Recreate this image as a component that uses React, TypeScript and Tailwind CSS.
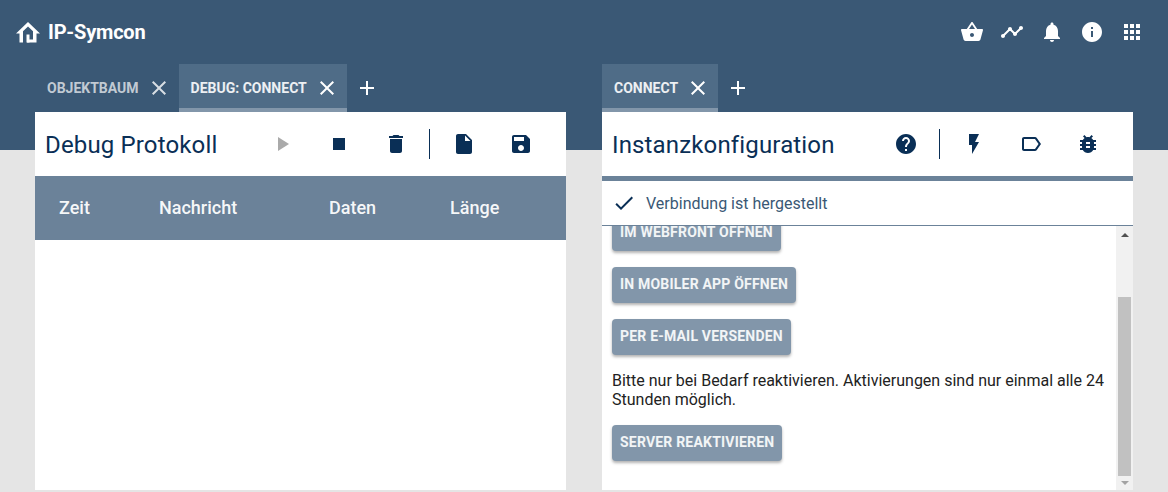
const P = {
  basket: "M17.21 9l-4.38-6.56c-.19-.28-.51-.42-.83-.42-.32 0-.64.14-.83.43L6.79 9H2c-.55 0-1 .45-1 1 0 .09.01.18.04.27l2.54 9.27c.23.84 1 1.46 1.92 1.46h13c.92 0 1.69-.62 1.93-1.46l2.54-9.27L23 10c0-.55-.45-1-1-1h-4.79zM9 9l3-4.4L15 9H9zm3 8c-1.1 0-2-.9-2-2s.9-2 2-2 2 .9 2 2-.9 2-2 2z",
  timeline: "M23 8c0 1.1-.9 2-2 2-.18 0-.35-.02-.51-.07l-3.56 3.55c.05.16.07.34.07.52 0 1.1-.9 2-2 2s-2-.9-2-2c0-.18.02-.36.07-.52l-2.55-2.55c-.16.05-.34.07-.52.07s-.36-.02-.52-.07l-4.55 4.56c.05.16.07.33.07.51 0 1.1-.9 2-2 2s-2-.9-2-2 .9-2 2-2c.18 0 .35.02.51.07l4.56-4.55C8.02 9.36 8 9.18 8 9c0-1.1.9-2 2-2s2 .9 2 2c0 .18-.02.36-.07.52l2.55 2.55c.16-.05.34-.07.52-.07s.36.02.52.07l3.55-3.56C19.02 8.35 19 8.18 19 8c0-1.1.9-2 2-2s2 .9 2 2z",
  bell: "M12 22c1.1 0 2-.9 2-2h-4c0 1.1.89 2 2 2zm6-6v-5c0-3.07-1.64-5.64-4.5-6.32V4c0-.83-.67-1.5-1.5-1.5s-1.5.67-1.5 1.5v.68C7.63 5.36 6 7.92 6 11v5l-2 2v1h16v-1l-2-2z",
  info: "M12 2C6.48 2 2 6.48 2 12s4.48 10 10 10 10-4.48 10-10S17.52 2 12 2zm1 15h-2v-6h2v6zm0-8h-2V7h2v2z",
  apps: "M4 8h4V4H4v4zm6 12h4v-4h-4v4zm-6 0h4v-4H4v4zm0-6h4v-4H4v4zm6 0h4v-4h-4v4zm6-10v4h4V4h-4zm-6 4h4V4h-4v4zm6 6h4v-4h-4v4zm0 6h4v-4h-4v4z",
  close: "M19 6.41L17.59 5 12 10.59 6.41 5 5 6.41 10.59 12 5 17.59 6.41 19 12 13.41 17.59 19 19 17.59 13.41 12z",
  add: "M19 13h-6v6h-2v-6H5v-2h6V5h2v6h6v2z",
  play: "M8 5v14l11-7z",
  stop: "M6 6h12v12H6z",
  trash: "M6 19c0 1.1.9 2 2 2h8c1.1 0 2-.9 2-2V7H6v12zM19 4h-3.5l-1-1h-5l-1 1H5v2h14V4z",
  file: "M6 2c-1.1 0-1.99.9-1.99 2L4 20c0 1.1.89 2 1.99 2H18c1.1 0 2-.9 2-2V8l-6-6H6zm7 7V3.5L18.5 9H13z",
  save: "M17 3H5c-1.11 0-2 .9-2 2v14c0 1.1.89 2 2 2h14c1.1 0 2-.9 2-2V7l-4-4zm-5 16c-1.66 0-3-1.34-3-3s1.34-3 3-3 3 1.34 3 3-1.34 3-3 3zm3-10H5V5h10v4z",
  help: "M12 2C6.48 2 2 6.48 2 12s4.48 10 10 10 10-4.48 10-10S17.52 2 12 2zm1 17h-2v-2h2v2zm2.07-7.75l-.9.92C13.45 12.9 13 13.5 13 15h-2v-.5c0-1.1.45-2.1 1.17-2.83l1.24-1.26c.37-.36.59-.86.59-1.41 0-1.1-.9-2-2-2s-2 .9-2 2H8c0-2.21 1.79-4 4-4s4 1.79 4 4c0 .88-.36 1.68-.93 2.25z",
  bolt: "M7 2v11h3v9l7-12h-4l4-8z",
  label: "M17.63 5.84C17.27 5.33 16.67 5 16 5L5 5.01C3.9 5.01 3 5.9 3 7v10c0 1.1.9 1.99 2 1.99L16 19c.67 0 1.27-.33 1.63-.84L22 12l-4.37-6.16zM16 17H5V7h11l3.55 5L16 17z",
  bug: "M20 8h-2.81c-.45-.78-1.07-1.45-1.82-1.96L17 4.41 15.59 3l-2.17 2.17C12.96 5.06 12.49 5 12 5c-.49 0-.96.06-1.41.17L8.41 3 7 4.41l1.62 1.63C7.88 6.55 7.26 7.22 6.81 8H4v2h2.09c-.05.33-.09.66-.09 1v1H4v2h2v1c0 .34.04.67.09 1H4v2h2.81c1.04 1.79 2.97 3 5.19 3s4.15-1.21 5.19-3H20v-2h-2.09c.05-.33.09-.66.09-1v-1h2v-2h-2v-1c0-.34-.04-.67-.09-1H20V8zm-6 8h-4v-2h4v2zm0-4h-4v-2h4v2z",
  check: "M9 16.17L4.83 12l-1.42 1.41L9 19 21 7l-1.41-1.41z",
};

const Icon = ({ d, className = "" }: { d: string; className?: string }) => (
  <svg viewBox="0 0 24 24" className={`w-6 h-6 shrink-0 fill-current ${className}`}>
    <path d={d} />
  </svg>
);

const Tab = ({ label, active }: { label: string; active?: boolean }) => (
  <div
    className={`h-12 pl-3 pr-2 flex items-center gap-2 ${
      active ? "bg-[#4f6c87] shadow-[inset_0_-4px_0_#8296aa] text-white/90" : "text-white/70"
    }`}
  >
    <span className="text-sm font-bold uppercase">{label}</span>
    <Icon d={P.close} className={active ? "text-white" : "text-white/80"} />
  </div>
);

const ToolIcon = ({ d, muted }: { d: string; muted?: boolean }) => (
  <div className={`w-[57px] h-14 flex items-center justify-center ${muted ? "text-[#aaaaaa]" : "text-[#0a2f56]"}`}>
    <Icon d={d} />
  </div>
);

const Divider = () => <div className="w-px h-[30px] mx-[5px] bg-[#0a2f56]" />;

const Btn = ({ children }: { children: string }) => (
  <button className="self-start h-9 px-2 pb-0.5 rounded bg-[#8296aa] text-white/90 text-sm font-bold tracking-[0.2px] uppercase shadow-[0_2px_3px_rgba(0,0,0,0.3)]">
    {children}
  </button>
);

export default function App() {
  return (
    <div className="relative h-[492px] w-[1168px] overflow-hidden bg-[#e5e5e5] font-['Roboto',sans-serif]">
      <div className="absolute inset-x-0 top-0 h-[150px] bg-[#3a5875]" />

      <div className="relative">
        {/* top bar */}
        <div className="h-16 pl-4 pr-4 flex items-center justify-between text-white">
          <div className="flex items-center gap-2">
            <svg viewBox="0 0 24 21" className="w-6 h-[21px] fill-white">
              <path d="M12 0 24 11.500H20.500V20.500H11V17.500H17V9.200L12 4.500 7 9.200V20.500H3.500V11.500H0z" />
              <path d="M10.500 12.500H13.500V20.500H10.500z" />
            </svg>
            <span className="text-xl font-bold tracking-[-0.2px]">IP-Symcon</span>
          </div>
          <div className="flex items-center">
            {[P.basket, P.timeline, P.bell, P.info, P.apps].map((d) => (
              <div key={d} className="w-10 h-10 flex items-center justify-center">
                <Icon d={d} />
              </div>
            ))}
          </div>
        </div>

        <div className="grid grid-cols-2 gap-9 px-[35px]">
          {/* left */}
          <div className="flex flex-col">
            <div className="flex items-center">
              <Tab label="Objektbaum" />
              <Tab label="Debug: Connect" active />
              <div className="w-10 flex justify-center text-white">
                <Icon d={P.add} />
              </div>
            </div>
            <div className="h-[378px] bg-white flex flex-col">
              <div className="h-16 pl-[10px] pr-[17px] flex items-center justify-between">
                <h1 className="pt-0.5 text-2xl tracking-[0.15px] text-[#0a2f56]">Debug Protokoll</h1>
                <div className="flex items-center">
                  <ToolIcon d={P.play} muted />
                  <ToolIcon d={P.stop} />
                  <ToolIcon d={P.trash} />
                  <Divider />
                  <ToolIcon d={P.file} />
                  <ToolIcon d={P.save} />
                </div>
              </div>
              <div className="h-16 bg-[#6b8299] text-white/95 text-lg font-medium grid grid-cols-[100px_170px_121px_1fr] pl-6 items-center">
                <span>Zeit</span>
                <span>Nachricht</span>
                <span>Daten</span>
                <span>Länge</span>
              </div>
            </div>
          </div>

          {/* right */}
          <div className="flex flex-col">
            <div className="flex items-center">
              <Tab label="Connect" active />
              <div className="w-10 flex justify-center text-white">
                <Icon d={P.add} />
              </div>
            </div>
            <div className="h-[378px] bg-white flex flex-col">
              <div className="h-16 pl-[10px] pr-[17px] flex items-center justify-between">
                <h1 className="pt-0.5 text-2xl tracking-[0.15px] text-[#0a2f56]">Instanzkonfiguration</h1>
                <div className="flex items-center">
                  <ToolIcon d={P.help} />
                  <Divider />
                  <ToolIcon d={P.bolt} />
                  <ToolIcon d={P.label} />
                  <ToolIcon d={P.bug} />
                </div>
              </div>
              <div className="h-[50px] border-t-[5px] border-b border-t-[#6b8299] border-b-[#6b8299] pl-[10px] flex items-center gap-[10px] text-[#3a5875]">
                <Icon d={P.check} className="text-[#0a2f56]" />
                <span className="pt-0.5">Verbindung ist hergestellt</span>
              </div>
              <div className="flex-1 min-h-0 flex">
                <div className="flex-1 min-w-0 overflow-hidden px-[10px]">
                  <div className="-mt-[11px] flex flex-col gap-4">
                    <Btn>Im Webfront öffnen</Btn>
                    <Btn>In mobiler App öffnen</Btn>
                    <Btn>Per E-Mail versenden</Btn>
                    <p className="leading-[19px] text-[#222222]">
                      Bitte nur bei Bedarf reaktivieren. Aktivierungen sind nur einmal alle 24 Stunden möglich.
                    </p>
                    <Btn>Server reaktivieren</Btn>
                  </div>
                </div>
                {/* scrollbar */}
                <div className="w-[17px] bg-[#f1f1f1] flex flex-col items-center">
                  <div className="h-[17px] flex items-center justify-center">
                    <div className="w-0 h-0 border-x-[4px] border-x-transparent border-b-[4px] border-b-[#505050]" />
                  </div>
                  <div className="h-[54px]" />
                  <div className="w-[13px] flex-1 bg-[#c1c1c1]" />
                  <div className="h-[14px] flex items-center justify-center">
                    <div className="w-0 h-0 border-x-[4px] border-x-transparent border-t-[4px] border-t-[#a3a3a3]" />
                  </div>
                </div>
              </div>
            </div>
          </div>
        </div>
      </div>
    </div>
  );
}
